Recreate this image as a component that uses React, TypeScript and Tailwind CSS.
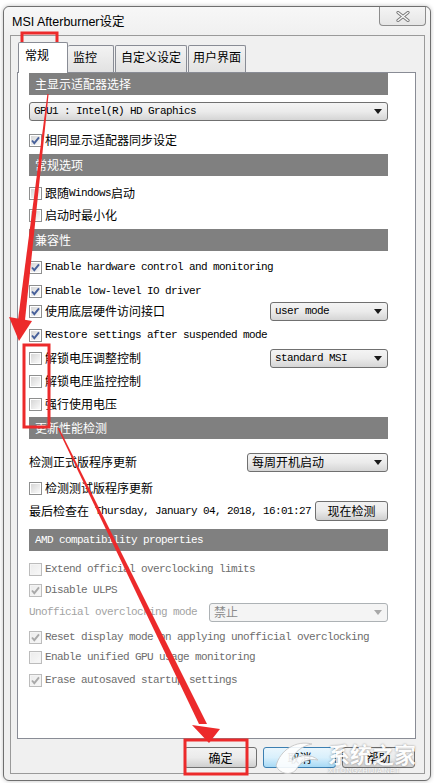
import type { ReactNode } from "react";

const mono = "font-['Liberation_Mono',monospace] text-[11px] tracking-[-0.6px]";
const cjk = "font-['Noto_Sans_CJK_SC',sans-serif] text-[12px]";

function Box({ checked, disabled }: { checked?: boolean; disabled?: boolean }) {
  return (
    <span
      className={`relative flex h-[13px] w-[13px] shrink-0 items-center justify-center border ${
        disabled ? "border-[#bcbcbc] bg-[#f4f4f4]" : "border-[#8e8f8f] bg-white"
      }`}
    >
      <span
        className={`absolute inset-[1px] bg-linear-to-br ${
          disabled ? "from-[#ececec] to-[#f7f7f7]" : "from-[#d6d6d6] to-[#fafafa]"
        }`}
      />
      {checked && (
        <svg className="relative" width="11" height="11" viewBox="0 0 11 11">
          <path
            d="M2 5.5 L4.3 8.2 L9 2.3"
            fill="none"
            stroke={disabled ? "#a9a9a9" : "#47609a"}
            strokeWidth="1.9"
          />
        </svg>
      )}
    </span>
  );
}

function Row({ mt, box, disabled, children }: { mt: string; box?: "on" | "off"; disabled?: boolean; children: ReactNode }) {
  return (
    <div className={`flex h-[20px] items-center ${mt} ${disabled ? "text-[#6d6d6d]" : "text-black"}`}>
      {box && <Box checked={box === "on"} disabled={disabled} />}
      <span className={`flex items-center whitespace-nowrap ${box ? "ml-[3px]" : ""}`}>{children}</span>
    </div>
  );
}

function Header({ mt, children }: { mt: string; children: ReactNode }) {
  return (
    <div className={`flex h-[22px] w-[359px] items-center bg-[#808080] pl-[6px] text-white ${mt}`}>{children}</div>
  );
}

function Select({ w, disabled, children }: { w: string; disabled?: boolean; children: ReactNode }) {
  return (
    <div
      className={`flex h-[19px] items-center justify-between rounded-[3px] border pl-[4px] pr-[5px] ${w} ${
        disabled
          ? "border-[#adb2b5] bg-[#f4f4f4] text-[#8a8a8a]"
          : "border-[#707070] bg-linear-to-b from-[#f4f4f4] via-[#ebebeb] to-[#d5d5d5] text-black"
      }`}
    >
      <span className="flex items-center whitespace-nowrap">{children}</span>
      <svg width="8" height="5" viewBox="0 0 8 5">
        <path d="M0 0 H8 L4 5 Z" fill={disabled ? "#a8a8a8" : "#1a1a1a"} />
      </svg>
    </div>
  );
}

function Btn({ children, blue }: { children: ReactNode; blue?: boolean }) {
  return (
    <div
      className={`flex h-[21px] w-[73px] items-center justify-center rounded-[3px] border text-black ${cjk} ${
        blue
          ? "border-[#3c7fb1] bg-linear-to-b from-[#eaf6fd] via-[#d9f0fc] to-[#a7d9f5]"
          : "border-[#707070] bg-linear-to-b from-[#f2f2f2] via-[#ebebeb] to-[#cfcfcf]"
      }`}
    >
      {children}
    </div>
  );
}

export default function App() {
  return (
    <div className="relative h-[783px] w-[434px] overflow-hidden bg-white">
      <div className="ml-[3px] mt-[6px] h-[775px] w-[428px] rounded-[6px] border border-[#6f6f6f] bg-[#f0f0f0] shadow-[0_0_4px_rgba(0,0,0,0.25)]">
        {/* title bar */}
        <div className="flex h-[28px] items-start justify-between rounded-t-[6px] bg-linear-to-b from-[#f7f7f7] to-[#f0f0f0]">
          <span className="ml-[8px] mt-[6px] font-['Liberation_Sans','Noto_Sans_CJK_SC',sans-serif] text-[12.5px] leading-[18px] text-black">
            MSI Afterburner设定
          </span>
          <div className="mr-[4px] flex h-[19px] w-[47px] items-center justify-center rounded-b-[4px] border border-t-0 border-[#8d8d8d] bg-linear-to-b from-[#f4f4f4] to-[#e6e6e6]">
            <svg width="14" height="11" viewBox="0 0 14 11">
              <path d="M2 1.5 L12 9.5 M12 1.5 L2 9.5" stroke="#777" strokeWidth="3.2" strokeLinecap="round" />
              <path d="M2 1.5 L12 9.5 M12 1.5 L2 9.5" stroke="#fafafa" strokeWidth="1.4" strokeLinecap="round" />
            </svg>
          </div>
        </div>

        {/* client frame */}
        <div className="ml-[6px] h-[739px] w-[415px] border border-[#9a9a9a] bg-[#f0f0f0] pl-[6px] pt-[6px]">
          {/* tab strip */}
          <div className={`flex h-[30px] w-[399px] items-end pl-[1px] ${cjk}`}>
            <div className="relative z-10 mb-[-1px] flex h-[31px] w-[50px] items-start rounded-t-[2px] border border-b-0 border-[#898c95] bg-white pl-[6px] pt-[3px]">
              常规
            </div>
            <div className="flex h-[27px] w-[46px] items-start rounded-t-[2px] border border-b-0 border-l-0 border-[#898c95] bg-linear-to-b from-[#f3f3f3] to-[#e2e2e2] pl-[5px] pt-[2px]">
              监控
            </div>
            <div className="ml-[1px] flex h-[27px] w-[72px] items-start rounded-t-[2px] border border-b-0 border-[#898c95] bg-linear-to-b from-[#f3f3f3] to-[#e2e2e2] pl-[5px] pt-[2px]">
              自定义设定
            </div>
            <div className="ml-[1px] flex h-[27px] w-[58px] items-start rounded-t-[2px] border border-b-0 border-[#898c95] bg-linear-to-b from-[#f3f3f3] to-[#e2e2e2] pl-[4px] pt-[2px]">
              用户界面
            </div>
          </div>

          {/* tab page */}
          <div className={`h-[667px] w-[399px] border border-[#898c95] bg-white pl-[11px] ${cjk}`}>
            <Header mt="mt-0">主显示适配器选择</Header>
            <div className="mt-[7px]">
              <Select w="w-[359px]">
                <span className={mono}>GPU1 : Intel(R) HD Graphics</span>
              </Select>
            </div>
            <Row mt="mt-[9px]" box="on">相同显示适配器同步设定</Row>

            <Header mt="mt-[4px]">常规选项</Header>
            <Row mt="mt-[7px]" box="off">
              跟随<span className={mono}>Windows</span>启动
            </Row>
            <Row mt="mt-[2px]" box="off">启动时最小化</Row>

            <Header mt="mt-[4px]">兼容性</Header>
            <Row mt="mt-[6px]" box="on">
              <span className={mono}>Enable hardware control and monitoring</span>
            </Row>
            <Row mt="mt-[4px]" box="on">
              <span className={mono}>Enable low-level IO driver</span>
            </Row>
            <div className="flex h-[20px] w-[359px] items-center justify-between">
              <span className="flex items-center">
                <Box checked />
                <span className="ml-[3px]">使用底层硬件访问接口</span>
              </span>
              <Select w="w-[118px]">
                <span className={mono}>user mode</span>
              </Select>
            </div>
            <Row mt="mt-[4px]" box="on">
              <span className={mono}>Restore settings after suspended mode</span>
            </Row>
            <div className="mt-[3px] flex h-[20px] w-[359px] items-center justify-between">
              <span className="flex items-center">
                <Box />
                <span className="ml-[3px]">解锁电压调整控制</span>
              </span>
              <Select w="w-[118px]">
                <span className={mono}>standard MSI</span>
              </Select>
            </div>
            <Row mt="mt-[3px]" box="off">解锁电压监控控制</Row>
            <Row mt="mt-[3px]" box="off">强行使用电压</Row>

            <Header mt="mt-[3px]">更新性能检测</Header>
            <div className="mt-[13px] flex h-[20px] w-[359px] items-center justify-between">
              <span>检测正式版程序更新</span>
              <Select w="w-[141px]">每周开机启动</Select>
            </div>
            <Row mt="mt-[6px]" box="off">检测测试版程序更新</Row>
            <div className="mt-[3px] flex h-[20px] w-[359px] items-center justify-between">
              <span className="flex w-[284px] items-center overflow-hidden whitespace-nowrap">
                最后检查在<span className={`${mono} whitespace-pre`}> Thursday, January 04, 2018, 16:01:27</span>
              </span>
              <div className="flex h-[20px] w-[73px] items-center justify-center rounded-[3px] border border-[#707070] bg-linear-to-b from-[#f2f2f2] via-[#ebebeb] to-[#cfcfcf]">
                现在检测
              </div>
            </div>

            <Header mt="mt-[8px]">
              <span className={mono}>AMD compatibility properties</span>
            </Header>
            <Row mt="mt-[8px]" box="off" disabled>
              <span className={mono}>Extend official overclocking limits</span>
            </Row>
            <Row mt="mt-[1px]" box="on" disabled>
              <span className={mono}>Disable ULPS</span>
            </Row>
            <div className="mt-[2px] flex h-[20px] w-[359px] items-center justify-between">
              <span className={`${mono} text-[#a3a3a3]`}>Unofficial overclocking mode</span>
              <Select w="w-[179px]" disabled>
                禁止
              </Select>
            </div>
            <Row mt="mt-[5px]" box="on" disabled>
              <span className={mono}>Reset display mode on applying unofficial overclocking</span>
            </Row>
            <Row mt="mt-0" box="off" disabled>
              <span className={mono}>Enable unified GPU usage monitoring</span>
            </Row>
            <Row mt="mt-[3px]" box="on" disabled>
              <span className={mono}>Erase autosaved startup settings</span>
            </Row>
          </div>

          {/* dialog buttons */}
          <div className="mt-[8px] flex w-[399px] justify-end gap-[6px] pr-[1px]">
            <Btn>确定</Btn>
            <Btn blue>取消</Btn>
            <Btn>帮助</Btn>
          </div>
        </div>
      </div>

      {/* watermark */}
      <div className="pointer-events-none absolute left-[272px] top-[736px] flex items-center gap-[4px] opacity-90">
        <svg width="52" height="42" viewBox="0 0 52 42">
          <path
            d="M4 30 C8 14 24 4 40 8 C30 10 22 16 20 24 C28 18 40 18 46 24 C36 22 28 26 24 34 C18 40 8 38 4 30 Z"
            fill="#ffffff"
            stroke="#c9c9c9"
            strokeWidth="1"
          />
        </svg>
        <div className="flex flex-col items-start">
          <span className="font-['Noto_Sans_CJK_SC',sans-serif] text-[22px] font-bold leading-[26px] text-white [text-shadow:0_0_2px_rgba(0,0,0,0.45)]">
            系统之家
          </span>
          <span className="font-['Liberation_Sans',sans-serif] text-[7px] leading-[9px] tracking-[0.5px] text-white [text-shadow:0_0_2px_rgba(0,0,0,0.5)]">
            XITONGZHIJIA.NET
          </span>
        </div>
      </div>

      {/* red annotations */}
      <svg className="pointer-events-none absolute left-0 top-0" width="434" height="783" viewBox="0 0 434 783">
        <g fill="none" stroke="#ec2a2b" strokeWidth="3">
          <rect x="22" y="33" width="35" height="38" />
          <rect x="24" y="345" width="25" height="82" />
          <rect x="185" y="740" width="62" height="34" />
        </g>
        <g fill="#ec2a2b">
          <polygon points="47.4,94 48.6,94 25,320 18,320" />
          <polygon points="9,317 32,321 19,341" />
          <polygon points="57.5,428 59,428 207,724 199,724" />
          <polygon points="192,725 220,729 209,743" />
        </g>
      </svg>
    </div>
  );
}
